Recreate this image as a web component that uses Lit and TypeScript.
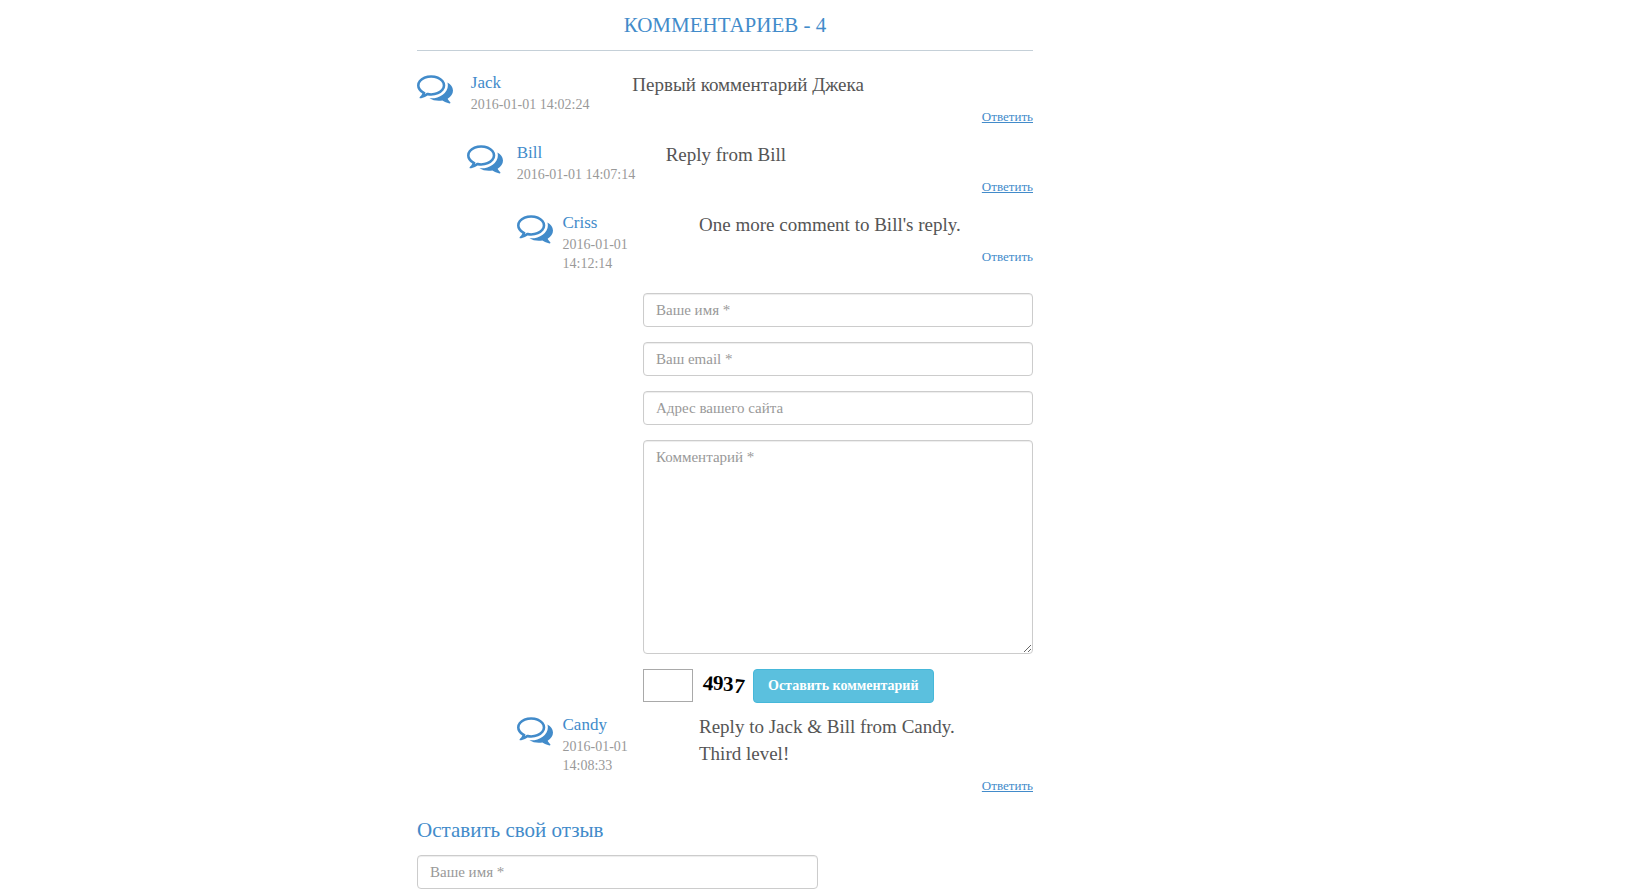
import { LitElement, html, css, svg } from "lit";
import { customElement, property } from "lit/decorators.js";

const commentsIcon = svg`<path fill="currentColor" d="M704 384q-153 0-286 52t-211.5 141-78.5 191q0 82 53 158t149 132l97 56-35 84q34-20 62-39l44-31 53 10q78 14 153 14 153 0 286-52t211.5-141 78.5-191-78.5-191-211.5-141-286-52zm0-128q191 0 353.5 68.5t256.5 186.5 94 257-94 257-256.5 186.5-353.5 68.5q-86 0-176-16-124 88-278 128-36 9-86 16h-3q-11 0-20.5-8t-11.5-21q-1-3-1-6.5t.5-6.5 2-6l2.5-5 3.5-5.5 4-5 4.5-5 4-4.5q5-6 23-25t26-29.5 22.5-29 25-38.5 20.5-44q-124-72-195-177t-71-224q0-139 94-257t256.5-186.5 353.5-68.5zm822 1169q10 24 20.5 44t25 38.5 22.5 29 26 29.5 23 25q1 1 4 4.5t4.5 5 4 5 3.5 5.5l2.5 5 2 6 .5 6.5-1 6.5q-3 14-13 22t-22 7q-50-7-86-16-154-40-278-128-90 16-176 16-271 0-472-132 58 4 88 4 161 0 309-45t264-129q125-92 192-212t67-254q0-77-23-152 129 71 204 178t75 230q0 120-71 224.5t-195 176.5z"/>`;

const fieldStyles = css`
  .field {
    display: block;
    box-sizing: border-box;
    width: 100%;
    height: 34px;
    margin: 0;
    padding: 6px 12px;
    border: 1px solid #ccc;
    border-radius: 4px;
    background: #fff;
    box-shadow: inset 0 1px 1px rgba(0, 0, 0, 0.075);
    color: #555;
    font: 15px/20px "Liberation Serif", serif;
  }
  .field::placeholder {
    color: #999;
    opacity: 1;
  }
`;

@customElement("comment-item")
class CommentItem extends LitElement {
  @property() author = "";
  @property() date = "";
  @property({ attribute: false }) lines: string[] = [];
  @property({ type: Boolean }) active = false;

  static styles = css`
    :host {
      display: block;
    }
    .row {
      display: grid;
      grid-template-columns: repeat(12, minmax(0, 1fr));
      column-gap: 30px;
      padding-bottom: 13px;
    }
    .icon {
      display: block;
      width: 36px;
      height: 36px;
      color: #428bca;
    }
    .meta {
      grid-column: 2 / span 3;
      display: flex;
      flex-direction: column;
      gap: 1px;
      padding-top: 2px;
    }
    .author {
      color: #428bca;
      font-size: 17px;
      line-height: 22px;
    }
    .date {
      color: #999;
      font-size: 14px;
      line-height: 19px;
    }
    .body {
      grid-column: 5 / span 8;
      display: flex;
      flex-direction: column;
      gap: 9px;
      padding-top: 1px;
    }
    .text {
      margin: 0;
      color: #555;
      font-size: 19px;
      line-height: 27px;
    }
    .answer {
      align-self: flex-end;
      color: #428bca;
      font-size: 13px;
      line-height: 20px;
      text-decoration: underline;
    }
    .answer.active {
      text-decoration: none;
    }
  `;

  render() {
    return html`
      <article class="row">
        <svg class="icon" viewBox="0 0 1792 1792" aria-hidden="true">${commentsIcon}</svg>
        <div class="meta">
          <span class="author">${this.author}</span>
          <time class="date">${this.date}</time>
        </div>
        <div class="body">
          <p class="text">${this.lines.map((l, i) => (i ? html`<br />${l}` : l))}</p>
          <a class="answer ${this.active ? "active" : ""}" href="#reply">Ответить</a>
        </div>
      </article>
    `;
  }
}

@customElement("reply-form")
class ReplyForm extends LitElement {
  static styles = [
    fieldStyles,
    css`
      :host {
        display: block;
      }
      .form {
        display: flex;
        flex-direction: column;
        gap: 15px;
      }
      .area {
        height: 214px;
        resize: vertical;
      }
      .submit-row {
        display: flex;
        align-items: flex-start;
        gap: 5px;
      }
      .code {
        box-sizing: border-box;
        width: 50px;
        height: 33px;
        margin: 0;
        padding: 2px 6px;
        border: 1px solid #a9a9a9;
        font: 15px/20px "Liberation Serif", serif;
      }
      .captcha {
        display: block;
        width: 50px;
        height: 34px;
        font: bold 21px "Liberation Serif", serif;
      }
      .submit {
        box-sizing: border-box;
        height: 34px;
        margin: 0;
        padding: 6px 14px;
        border: 1px solid #46b8da;
        border-radius: 4px;
        background: #5bc0de;
        color: #fff;
        font: bold 14px/20px "Liberation Serif", serif;
        cursor: pointer;
      }
    `,
  ];

  render() {
    return html`
      <form class="form" id="reply">
        <input class="field" type="text" placeholder="Ваше имя *" aria-label="Ваше имя" />
        <input class="field" type="email" placeholder="Ваш email *" aria-label="Ваш email" />
        <input class="field" type="url" placeholder="Адрес вашего сайта" aria-label="Адрес вашего сайта" />
        <textarea class="field area" placeholder="Комментарий *" aria-label="Комментарий"></textarea>
        <div class="submit-row">
          <input class="code" type="text" aria-label="Код" />
          <svg class="captcha" viewBox="0 0 50 34">
            <text x="5" y="21" transform="rotate(4 10 14)">4</text>
            <text x="15" y="21">9</text>
            <text x="25" y="22">3</text>
            <text x="36" y="24" transform="rotate(6 41 18)">7</text>
          </svg>
          <button class="submit" type="button">Оставить комментарий</button>
        </div>
      </form>
    `;
  }
}

@customElement("app-root")
class AppRoot extends LitElement {
  static styles = [
    fieldStyles,
    css`
      :host {
        display: grid;
        grid-template-columns: minmax(0, 417fr) minmax(0, 616fr) minmax(0, 618fr);
        background: #fff;
        font-family: "Liberation Serif", serif;
      }
      .comments {
        grid-column: 2;
      }
      .title {
        margin: 0 0 19px;
        padding: 12px 0 12px;
        border-bottom: 1px solid #c5d0d8;
        color: #428bca;
        font-size: 21px;
        font-weight: normal;
        line-height: 26px;
        text-align: center;
      }
      .nested {
        margin-left: 50px;
      }
      .reply {
        margin: 7px 0 9px calc(25% - 3px);
      }
      .subtitle {
        margin: 7px 0 11px;
        color: #428bca;
        font-size: 21px;
        font-weight: normal;
        line-height: 28px;
      }
      .review {
        width: calc(65% + 1px);
        padding-bottom: 6px;
      }
    `,
  ];

  render() {
    return html`
      <main class="comments">
        <h1 class="title">КОММЕНТАРИЕВ - 4</h1>
        <comment-item author="Jack" date="2016-01-01 14:02:24" .lines=${["Первый комментарий Джека"]}></comment-item>
        <section class="nested">
          <comment-item author="Bill" date="2016-01-01 14:07:14" .lines=${["Reply from Bill"]}></comment-item>
          <section class="nested">
            <comment-item author="Criss" date="2016-01-01 14:12:14" active .lines=${["One more comment to Bill's reply."]}></comment-item>
            <reply-form class="reply"></reply-form>
            <comment-item author="Candy" date="2016-01-01 14:08:33" .lines=${["Reply to Jack & Bill from Candy.", "Third level!"]}></comment-item>
          </section>
        </section>
        <h2 class="subtitle">Оставить свой отзыв</h2>
        <form class="review">
          <input class="field" type="text" placeholder="Ваше имя *" aria-label="Ваше имя" />
        </form>
      </main>
    `;
  }
}
